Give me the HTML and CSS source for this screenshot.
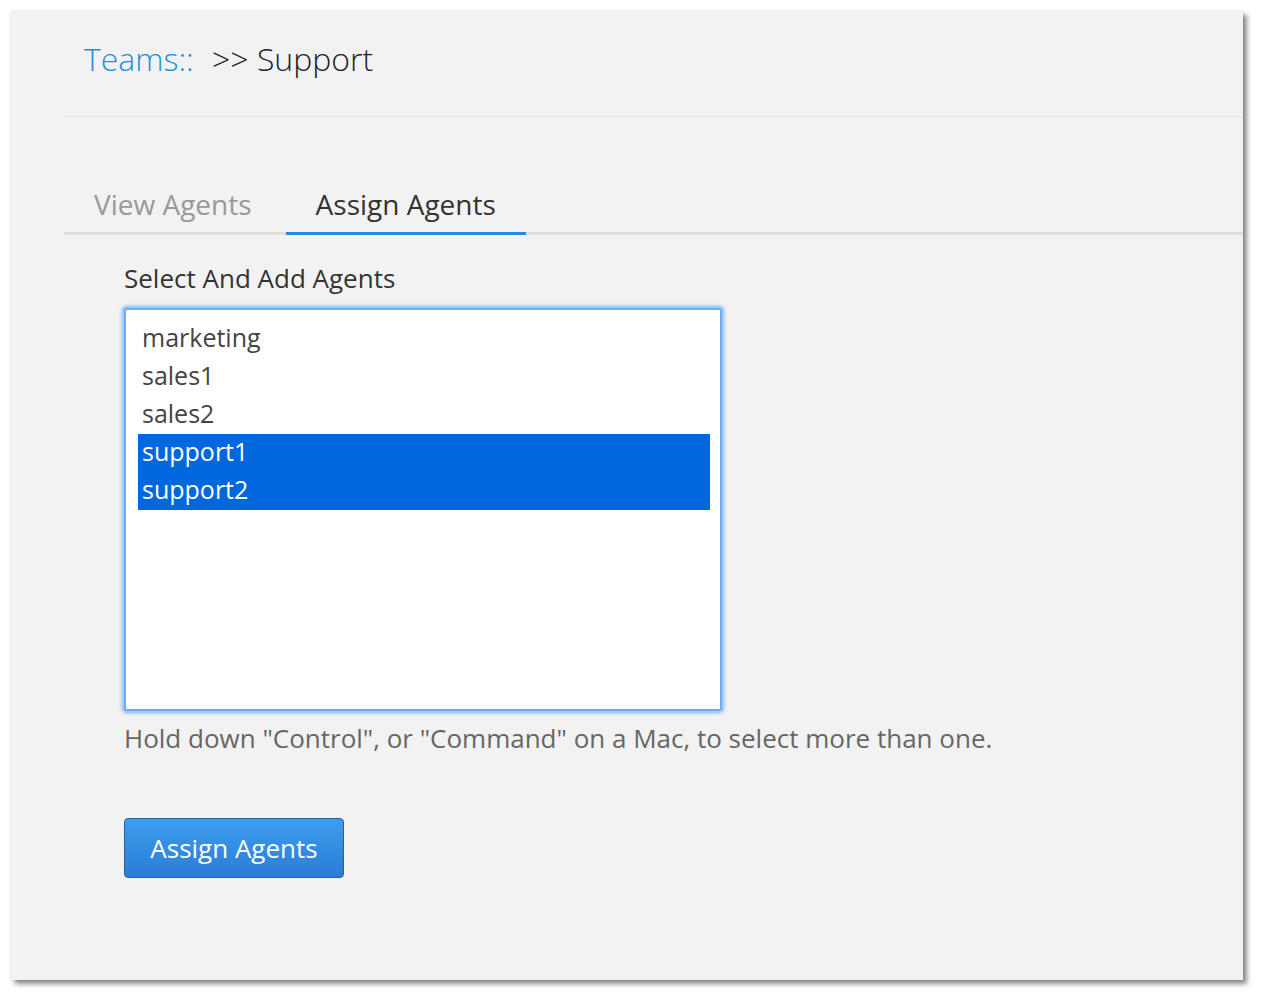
FILE: index.html
```html
<!DOCTYPE html>
<html lang="en">
<head>
    <meta charset="UTF-8">
    <title>Teams - Support</title>
    <link rel="stylesheet" href="styles.css">
</head>
<body>
    <div class="panel">
        <div class="page-header">
            <span class="crumb-link">Teams::</span>
            <span class="crumb-current">&gt;&gt; Support</span>
        </div>

        <ul class="tabs">
            <li class="tab">View Agents</li>
            <li class="tab active">Assign Agents</li>
        </ul>

        <form class="assign-form">
            <label class="field-label">Select And Add Agents</label>
            <div class="agent-select" role="listbox" aria-multiselectable="true">
                <div class="option">marketing</div>
                <div class="option">sales1</div>
                <div class="option">sales2</div>
                <div class="option selected">support1</div>
                <div class="option selected">support2</div>
            </div>
            <p class="help-text">Hold down "Control", or "Command" on a Mac, to select more than one.</p>
            <button type="button" class="btn-primary">Assign Agents</button>
        </form>
    </div>
</body>
</html>
```

FILE: styles.css
```css
body {
    margin: 0;
    padding: 11px;
    background: #ffffff;
    font-family: "Open Sans", "DejaVu Sans", sans-serif;
}

.panel {
    width: 1232px;
    height: 969px;
    box-sizing: border-box;
    padding-left: 53px;
    background: #f2f2f2;
    box-shadow: 4px 4px 5px rgba(0,0,0,0.45), 0 0 3px rgba(0,0,0,0.15);
}

.page-header {
    height: 106px;
    box-sizing: border-box;
    padding: 26px 0 0 20px;
    border-bottom: 1px solid #e4e4e4;
    font-size: 32px;
    font-weight: 300;
    line-height: 44px;
    color: #222;
}

.crumb-link {
    color: #1b8fd8;
    margin-right: 10px;
}

.tabs {
    list-style: none;
    margin: 0;
    padding: 68px 0 0;
    display: flex;
    border-bottom: 3px solid #dedede;
}

.tab {
    font-size: 28px;
    line-height: 38px;
    padding: 0 30px 9px;
    margin-right: 4px;
    margin-bottom: -3px;
    border-bottom: 3px solid transparent;
    color: #999;
}

.tab.active {
    color: #333;
    border-bottom-color: #2a87e2;
}

.assign-form {
    padding: 25px 0 0 60px;
}

.field-label {
    display: block;
    font-size: 26px;
    line-height: 36px;
    color: #333;
}

.agent-select {
    width: 598px;
    height: 403px;
    margin-top: 12px;
    box-sizing: border-box;
    padding: 10px 10px 0 12px;
    background: #fff;
    border: 2px solid #6fabee;
    border-radius: 3px;
    box-shadow: 0 0 0 2px #a6cbf5, 0 0 3px 3px rgba(120,175,240,0.5);
}

.option {
    font-size: 25px;
    line-height: 34px;
    height: 38px;
    box-sizing: border-box;
    padding: 0 0 4px 4px;
    color: #444;
}

.option.selected {
    background: #0067dc;
    color: #fff;
}

.help-text {
    margin: 9px 0 0;
    font-size: 26px;
    line-height: 36px;
    color: #666;
}

.btn-primary {
    display: block;
    margin-top: 62px;
    width: 220px;
    height: 60px;
    border: 1px solid #2c5f96;
    border-radius: 4px;
    background: linear-gradient(#3d9eee, #2b7cd7);
    color: #fff;
    font-family: "Open Sans", "DejaVu Sans", sans-serif;
    font-size: 26px;
    cursor: pointer;
}
```
